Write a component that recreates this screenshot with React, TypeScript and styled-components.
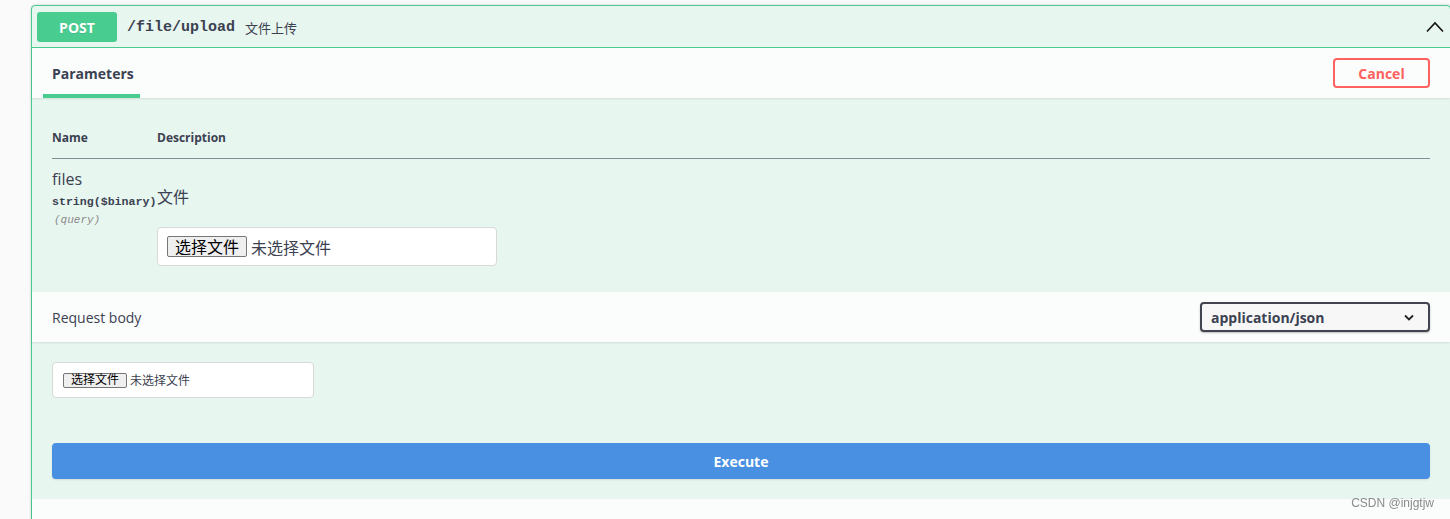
import React from "react";
import styled, { createGlobalStyle } from "styled-components";

const GlobalStyle = createGlobalStyle`
  html, body {
    margin: 0;
    padding: 0;
    background: #fafafa;
    overflow: hidden;
  }
  body {
    font-family: "Open Sans", "Noto Sans CJK SC", sans-serif;
    color: #3b4151;
  }
  * { box-sizing: border-box; }
`;

const cjk = `"Open Sans", "Noto Sans CJK SC", sans-serif`;
const mono = `"Liberation Mono", "DejaVu Sans Mono", "Noto Sans CJK SC", monospace`;

const Page = styled.div`
  padding: 5px 0 0 31px;
  min-height: 519px;
`;

const OpBlock = styled.div`
  width: 1420px;
  border: 1px solid #49cc90;
  border-radius: 4px;
  background: #e8f6f0;
  box-shadow: 0 0 3px rgba(0, 0, 0, 0.19);
  min-height: 600px;
`;

const Summary = styled.div`
  display: flex;
  align-items: center;
  height: 42px;
  padding: 0 5px;
  border-bottom: 1px solid #49cc90;
`;

const MethodBadge = styled.span`
  display: flex;
  align-items: center;
  justify-content: center;
  min-width: 80px;
  height: 30px;
  padding-top: 1px;
  border-radius: 3px;
  background: #49cc90;
  color: #fff;
  font-family: ${cjk};
  font-weight: 700;
  font-size: 14px;
  text-shadow: 0 1px 0 rgba(0, 0, 0, 0.1);
`;

const PathText = styled.span`
  padding: 2px 10px 0;
  font-family: ${mono};
  font-weight: 700;
  font-size: 15px;
  color: #3b4151;
`;

const SummaryDesc = styled.span`
  flex: 1;
  padding-top: 1px;
  font-family: ${cjk};
  font-size: 13px;
  color: #3b4151;
`;

const Arrow = styled.svg`
  width: 18px;
  height: 12px;
  margin-right: 1px;
`;

const SectionHeader = styled.div`
  display: flex;
  align-items: center;
  justify-content: space-between;
  height: 50px;
  padding: 0 20px;
  background: rgba(255, 255, 255, 0.8);
  box-shadow: 0 1px 2px rgba(0, 0, 0, 0.1);
`;

const Tab = styled.div`
  align-self: stretch;
  display: flex;
  align-items: center;
  margin-left: -9px;
  padding: 4px 6px 0 9px;
  border-bottom: 4px solid #49cc90;
  font-family: ${cjk};
  font-weight: 700;
  font-size: 14px;
  color: #3b4151;
`;

const CancelButton = styled.button`
  width: 97px;
  height: 30px;
  border: 2px solid #ff6060;
  border-radius: 4px;
  background: transparent;
  color: #ff6060;
  font-family: ${cjk};
  font-weight: 700;
  font-size: 14px;
  padding: 0;
`;

const ParamsBody = styled.div`
  padding: 20px 20px 20px;
`;

const Table = styled.table`
  width: 100%;
  border-collapse: collapse;
`;

const Th = styled.th<{ $w?: number }>`
  text-align: left;
  width: ${(p) => (p.$w ? `${p.$w}px` : "auto")};
  padding: 12px 0 13px;
  font-family: ${cjk};
  font-size: 12px;
  font-weight: 700;
  line-height: 15px;
  color: #3b4151;
  border-bottom: 1px solid rgba(59, 65, 81, 0.35);
`;

const Td = styled.td`
  vertical-align: top;
  padding: 10px 0 6px;
`;

const ParamName = styled.div`
  font-family: ${cjk};
  font-size: 16px;
  line-height: 20px;
  color: #3b4151;
`;

const ParamType = styled.div`
  padding-top: 5px;
  font-family: ${mono};
  font-weight: 700;
  font-size: 11.6px;
  line-height: 15px;
  color: #3b4151;
  white-space: nowrap;
`;

const ParamIn = styled.div`
  padding-top: 4px;
  padding-left: 2px;
  font-family: ${mono};
  font-style: italic;
  font-size: 11px;
  line-height: 15px;
  color: #888;
`;

const DescText = styled.p`
  margin: 16px 0 18px;
  font-family: ${cjk};
  font-size: 16px;
  line-height: 24px;
  color: #3b4151;
`;

const FileBox = styled.div<{ $small?: boolean }>`
  display: flex;
  align-items: center;
  gap: ${(p) => (p.$small ? "3px" : "4px")};
  width: ${(p) => (p.$small ? "262px" : "340px")};
  height: ${(p) => (p.$small ? "36px" : "39px")};
  padding: 0 ${(p) => (p.$small ? "10px" : "9px")};
  border: 1px solid #d9d9d9;
  border-radius: 4px;
  background: #fff;
  font-family: ${cjk};
  font-size: ${(p) => (p.$small ? "12px" : "16px")};
  color: #3b4151;
`;

const NativeButton = styled.span<{ $small?: boolean }>`
  display: inline-flex;
  align-items: center;
  height: ${(p) => (p.$small ? "15px" : "21px")};
  padding: 0 7px;
  background: #efefef;
  border: 1px solid #767676;
  border-radius: 2px;
  color: #000;
  line-height: 1;
`;

const HeaderLabel = styled.span`
  font-family: ${cjk};
  font-size: 14px;
  font-weight: 400;
  color: #3b4151;
`;

const SelectBox = styled.div`
  display: flex;
  align-items: center;
  justify-content: space-between;
  width: 230px;
  height: 30px;
  padding: 0 14px 0 9px;
  border: 2px solid #41444e;
  border-radius: 4px;
  background: #f7f7f7;
  box-shadow: 0 1px 2px rgba(0, 0, 0, 0.25);
  font-family: ${cjk};
  font-weight: 700;
  font-size: 14px;
  color: #3b4151;
`;

const BodyContent = styled.div`
  padding: 20px 20px 20px;
`;

const ExecuteButton = styled.button`
  display: block;
  width: 100%;
  height: 36px;
  margin-top: 45px;
  border: none;
  border-radius: 4px;
  background: #4990e2;
  color: #fff;
  font-family: ${cjk};
  font-weight: 700;
  font-size: 14px;
  box-shadow: 0 1px 2px rgba(0, 0, 0, 0.1);
`;

const Watermark = styled.div`
  position: fixed;
  right: 16px;
  bottom: 9px;
  font-family: "Liberation Sans", Arial, sans-serif;
  font-size: 12px;
  line-height: 14px;
  color: #8a8a8a;
`;

export default function App() {
  return (
    <>
      <GlobalStyle />
      <Page>
        <OpBlock>
          <Summary>
            <MethodBadge>POST</MethodBadge>
            <PathText>/file/upload</PathText>
            <SummaryDesc>文件上传</SummaryDesc>
            <Arrow viewBox="0 0 18 12" fill="none">
              <polyline points="1,10.5 9,2 17,10.5" stroke="#111" strokeWidth="1.6" />
            </Arrow>
          </Summary>

          <SectionHeader>
            <Tab>Parameters</Tab>
            <CancelButton>Cancel</CancelButton>
          </SectionHeader>

          <ParamsBody>
            <Table>
              <thead>
                <tr>
                  <Th $w={105}>Name</Th>
                  <Th>Description</Th>
                </tr>
              </thead>
              <tbody>
                <tr>
                  <Td>
                    <ParamName>files</ParamName>
                    <ParamType>string($binary)</ParamType>
                    <ParamIn>(query)</ParamIn>
                  </Td>
                  <Td>
                    <DescText>文件</DescText>
                    <FileBox>
                      <NativeButton>选择文件</NativeButton>
                      <span>未选择文件</span>
                    </FileBox>
                  </Td>
                </tr>
              </tbody>
            </Table>
          </ParamsBody>

          <SectionHeader>
            <HeaderLabel>Request body</HeaderLabel>
            <SelectBox>
              <span>application/json</span>
              <svg width="10" height="7" viewBox="0 0 10 7" fill="none">
                <polyline points="1,1.5 5,5.5 9,1.5" stroke="#222" strokeWidth="1.8" />
              </svg>
            </SelectBox>
          </SectionHeader>

          <BodyContent>
            <FileBox $small>
              <NativeButton $small>选择文件</NativeButton>
              <span>未选择文件</span>
            </FileBox>
            <ExecuteButton>Execute</ExecuteButton>
          </BodyContent>

          <SectionHeader />
        </OpBlock>
      </Page>
      <Watermark>CSDN @injgtjw</Watermark>
    </>
  );
}
